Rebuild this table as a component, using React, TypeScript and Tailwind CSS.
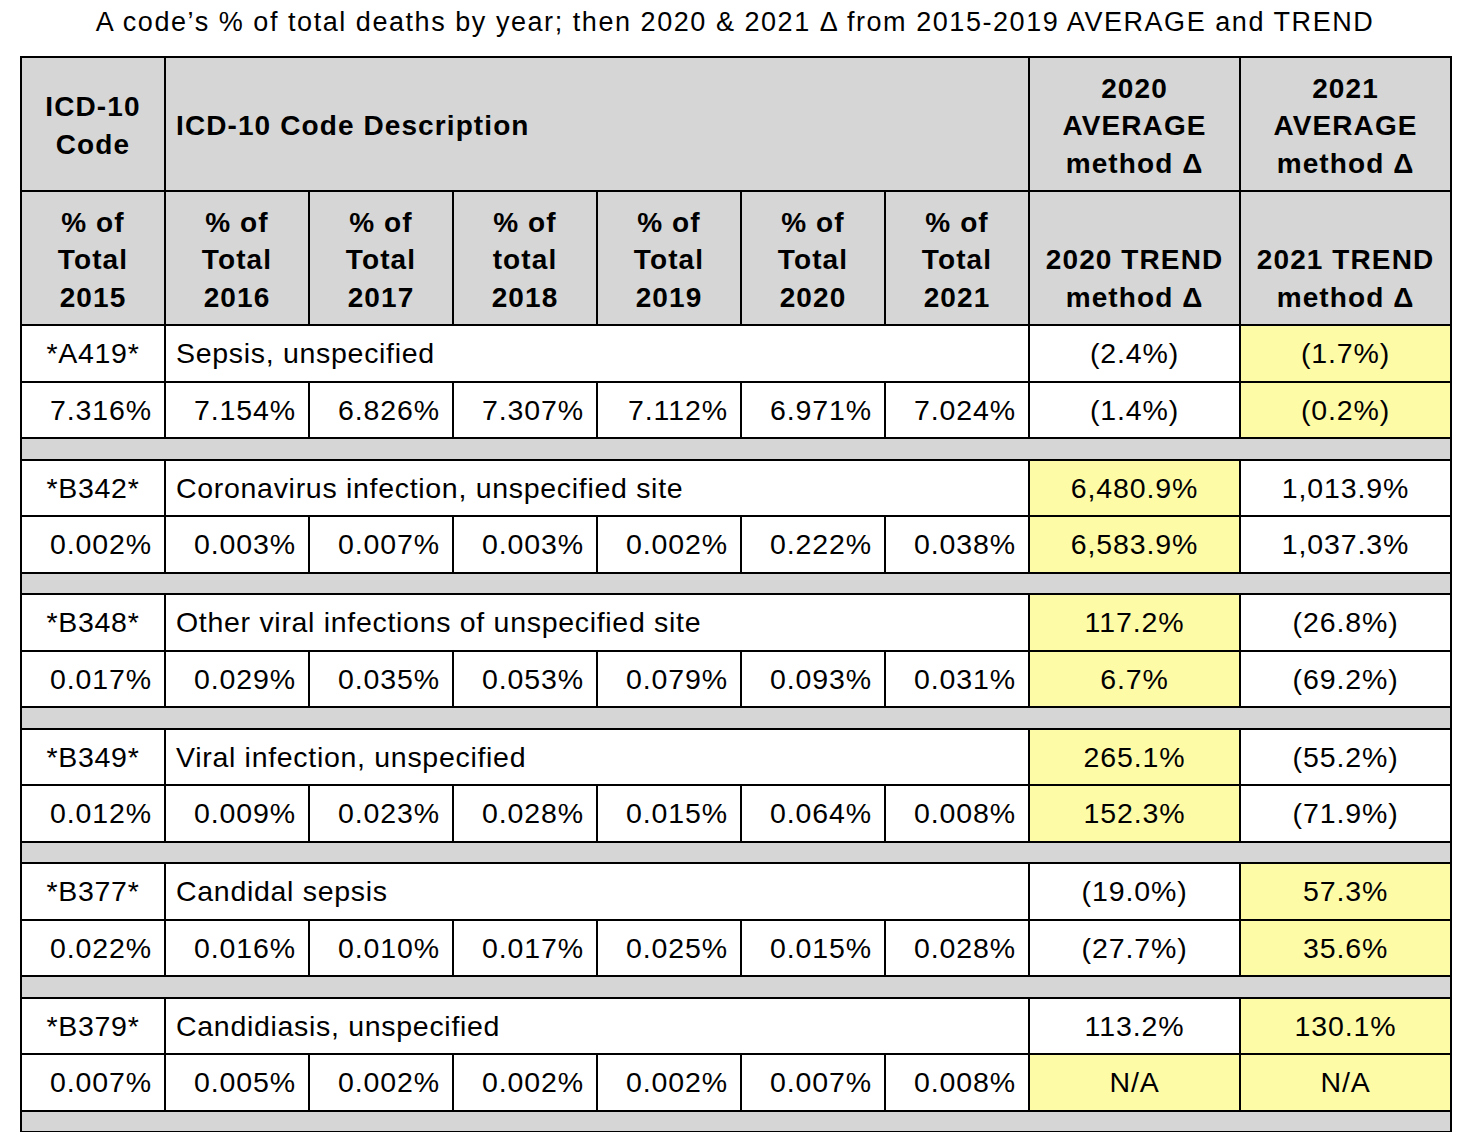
const YEARS = ["2015", "2016", "2017", "2018", "2019", "2020", "2021"];

type Row = {
  code: string;
  desc: string;
  vals: string[];
  avg: [string, string];
  trend: [string, string];
  // which of avg20, avg21, tr20, tr21 are highlighted
  hl: [boolean, boolean, boolean, boolean];
};

const rows: Row[] = [
  {
    code: "*A419*",
    desc: "Sepsis, unspecified",
    vals: ["7.316%", "7.154%", "6.826%", "7.307%", "7.112%", "6.971%", "7.024%"],
    avg: ["(2.4%)", "(1.7%)"],
    trend: ["(1.4%)", "(0.2%)"],
    hl: [false, true, false, true],
  },
  {
    code: "*B342*",
    desc: "Coronavirus infection, unspecified site",
    vals: ["0.002%", "0.003%", "0.007%", "0.003%", "0.002%", "0.222%", "0.038%"],
    avg: ["6,480.9%", "1,013.9%"],
    trend: ["6,583.9%", "1,037.3%"],
    hl: [true, false, true, false],
  },
  {
    code: "*B348*",
    desc: "Other viral infections of unspecified site",
    vals: ["0.017%", "0.029%", "0.035%", "0.053%", "0.079%", "0.093%", "0.031%"],
    avg: ["117.2%", "(26.8%)"],
    trend: ["6.7%", "(69.2%)"],
    hl: [true, false, true, false],
  },
  {
    code: "*B349*",
    desc: "Viral infection, unspecified",
    vals: ["0.012%", "0.009%", "0.023%", "0.028%", "0.015%", "0.064%", "0.008%"],
    avg: ["265.1%", "(55.2%)"],
    trend: ["152.3%", "(71.9%)"],
    hl: [true, false, true, false],
  },
  {
    code: "*B377*",
    desc: "Candidal sepsis",
    vals: ["0.022%", "0.016%", "0.010%", "0.017%", "0.025%", "0.015%", "0.028%"],
    avg: ["(19.0%)", "57.3%"],
    trend: ["(27.7%)", "35.6%"],
    hl: [false, true, false, true],
  },
  {
    code: "*B379*",
    desc: "Candidiasis, unspecified",
    vals: ["0.007%", "0.005%", "0.002%", "0.002%", "0.002%", "0.007%", "0.008%"],
    avg: ["113.2%", "130.1%"],
    trend: ["N/A", "N/A"],
    hl: [false, true, true, true],
  },
];

const td = "border-2 border-black p-0";
const head = `${td} bg-[#d6d6d6] font-bold text-[28px] leading-[37.5px] tracking-[1.1px]`;
const bodyText = "text-[28.5px] leading-none tracking-[0.7px]";
const num = "text-[28.5px] leading-none tracking-[0.9px]";

function bg(on: boolean) {
  return on ? "bg-[#fefba7]" : "bg-white";
}

export default function App() {
  return (
    <div className="min-h-screen bg-white text-black" style={{ fontFamily: '"Liberation Sans", Arial, sans-serif' }}>
      <div className="h-[56px] pt-[9px] text-center text-[27px] leading-[27px] tracking-[1.55px]">
        A code’s % of total deaths by year; then 2020 &amp; 2021 Δ from 2015-2019 AVERAGE and TREND
      </div>
      <table className="ml-[20px] w-[1430px] table-fixed border-collapse">
        <colgroup>
          {YEARS.map((y) => (
            <col key={y} className="w-[144px]" />
          ))}
          <col className="w-[211px]" />
          <col className="w-[211px]" />
        </colgroup>
        <tbody>
          <tr className="h-[133.5px]">
            <td className={`${head} pt-[4px] text-center align-middle`}>
              ICD-10
              <br />
              Code
            </td>
            <td colSpan={6} className={`${head} pl-[10px] pt-[4px] text-left align-middle`}>
              ICD-10 Code Description
            </td>
            <td className={`${head} pt-[4px] text-center align-middle`}>
              2020
              <br />
              AVERAGE
              <br />
              method Δ
            </td>
            <td className={`${head} pt-[4px] text-center align-middle`}>
              2021
              <br />
              AVERAGE
              <br />
              method Δ
            </td>
          </tr>
          <tr className="h-[134.5px]">
            {YEARS.map((y) => (
              <td key={y} className={`${head} pb-[8px] text-center align-bottom`}>
                % of
                <br />
                {y === "2018" ? "total" : "Total"}
                <br />
                {y}
              </td>
            ))}
            <td className={`${head} pb-[8px] text-center align-bottom`}>
              2020 TREND
              <br />
              method Δ
            </td>
            <td className={`${head} pb-[8px] text-center align-bottom`}>
              2021 TREND
              <br />
              method Δ
            </td>
          </tr>
          {rows.map((r) => (
            <RowBlock key={r.code} r={r} />
          ))}
        </tbody>
      </table>
    </div>
  );
}

function RowBlock({ r }: { r: Row }) {
  return (
    <>
      <tr className="h-[56.5px]">
        <td className={`${td} ${bodyText} bg-white text-center align-middle`}>{r.code}</td>
        <td colSpan={6} className={`${td} ${bodyText} bg-white pl-[10px] text-left align-middle`}>
          {r.desc}
        </td>
        <td className={`${td} ${num} ${bg(r.hl[0])} text-center align-middle`}>{r.avg[0]}</td>
        <td className={`${td} ${num} ${bg(r.hl[1])} text-center align-middle`}>{r.avg[1]}</td>
      </tr>
      <tr className="h-[56.5px]">
        {r.vals.map((v, i) => (
          <td key={i} className={`${td} ${num} bg-white pr-[12px] text-right align-middle`}>
            {v}
          </td>
        ))}
        <td className={`${td} ${num} ${bg(r.hl[2])} text-center align-middle`}>{r.trend[0]}</td>
        <td className={`${td} ${num} ${bg(r.hl[3])} text-center align-middle`}>{r.trend[1]}</td>
      </tr>
      <tr className="h-[21.5px]">
        <td colSpan={9} className={`${td} bg-[#d6d6d6]`} />
      </tr>
    </>
  );
}
